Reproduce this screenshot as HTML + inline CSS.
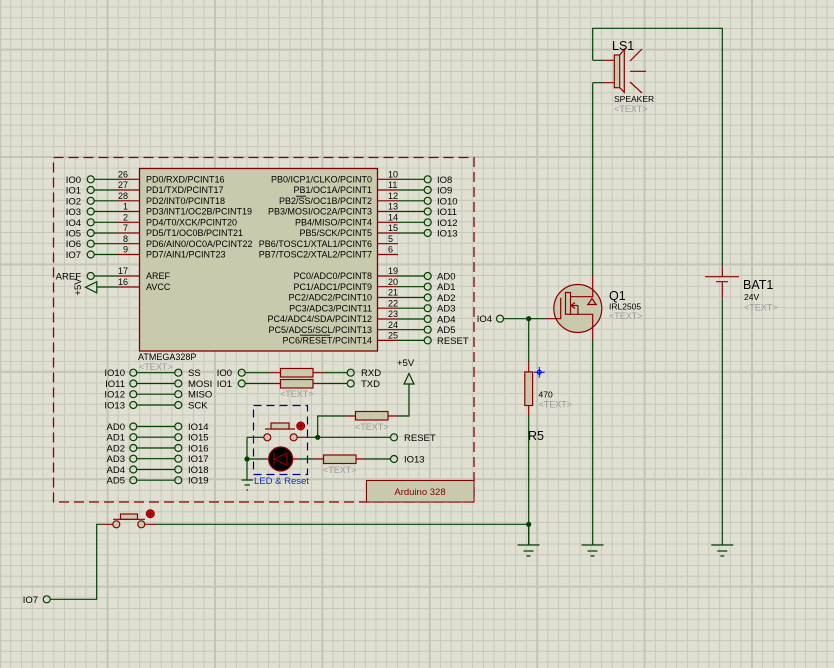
<!DOCTYPE html>
<html><head><meta charset="utf-8"><style>
html,body{margin:0;padding:0;background:#e0e0d2;}
svg{display:block;}
text{font-family:"Liberation Sans",sans-serif;fill:#000;}
.s{font-size:9.5px;}
.c{font-size:9px;}
.g{font-size:9px;fill:#9a9a9a;}
.n{font-size:9.5px;}
.big{font-size:12.5px;}
</style></head><body>
<svg width="834" height="668" viewBox="0 0 834 668" xmlns="http://www.w3.org/2000/svg">
<defs>
<pattern id="mi" x="10.3" y="6.5" width="10.74" height="10.74" patternUnits="userSpaceOnUse">
<path d="M0.5 0V10.74M0 0.5H10.74" stroke="#c6c7b9" stroke-width="1" fill="none"/>
</pattern>
<pattern id="ma" x="106.6" y="48.6" width="107.4" height="107.4" patternUnits="userSpaceOnUse">
<path d="M1 0V107.4M0 1H107.4" stroke="#c3c4b6" stroke-width="2" fill="none"/>
</pattern>
</defs>
<rect width="834" height="668" fill="#e0e0d2"/>
<rect width="834" height="668" fill="url(#mi)"/>
<rect width="834" height="668" fill="url(#ma)"/>

<!-- main dashed border -->
<rect x="53.5" y="157.5" width="420.5" height="344.5" fill="none" stroke="#8b0000" stroke-width="1.3" stroke-dasharray="10,5"/>
<rect x="366.5" y="480.5" width="107.5" height="21.5" fill="#c9c9ad" stroke="#800000" stroke-width="1"/>
<text x="420" y="495" text-anchor="middle" style="font-size:9.5px;fill:#800000">Arduino 328</text>

<!-- chip -->
<rect x="139.5" y="168.5" width="238" height="182.5" fill="#c9c9ad" stroke="#800000" stroke-width="1.3"/>

<g stroke-width="1.2" fill="none">
<g stroke="#004000">
<path d="M94 179.3H118M94 190H118M94 200.8H118M94 211.5H118M94 222.3H118M94 233H118M94 243.7H118M94 254.5H118M94 276H118M97 287H118"/>
<path d="M398 179.3H424M398 190H424M398 200.8H424M398 211.5H424M398 222.3H424M398 233H424M398 276H424M398 286.7H424M398 297.5H424M398 308.2H424M398 319H424M398 329.7H424M398 340.4H424"/>
</g>
<g stroke="#8b0000">
<path d="M118 179.3H139M118 190H139M118 200.8H139M118 211.5H139M118 222.3H139M118 233H139M118 243.7H139M118 254.5H139M118 276H139M118 287H139"/>
<path d="M377 179.3H398M377 190H398M377 200.8H398M377 211.5H398M377 222.3H398M377 233H398M377 243.7H398M377 254.5H398M377 276H398M377 286.7H398M377 297.5H398M377 308.2H398M377 319H398M377 329.7H398M377 340.4H398"/>
</g>
<g stroke="#004000">
<circle cx="90.7" cy="179.3" r="3.5"/><circle cx="90.7" cy="190" r="3.5"/><circle cx="90.7" cy="200.8" r="3.5"/><circle cx="90.7" cy="211.5" r="3.5"/><circle cx="90.7" cy="222.3" r="3.5"/><circle cx="90.7" cy="233" r="3.5"/><circle cx="90.7" cy="243.7" r="3.5"/><circle cx="90.7" cy="254.5" r="3.5"/><circle cx="90.7" cy="276" r="3.5"/>
<circle cx="427.7" cy="179.3" r="3.5"/><circle cx="427.7" cy="190" r="3.5"/><circle cx="427.7" cy="200.8" r="3.5"/><circle cx="427.7" cy="211.5" r="3.5"/><circle cx="427.7" cy="222.3" r="3.5"/><circle cx="427.7" cy="233" r="3.5"/>
<circle cx="427.7" cy="276" r="3.5"/><circle cx="427.7" cy="286.7" r="3.5"/><circle cx="427.7" cy="297.5" r="3.5"/><circle cx="427.7" cy="308.2" r="3.5"/><circle cx="427.7" cy="319" r="3.5"/><circle cx="427.7" cy="329.7" r="3.5"/><circle cx="427.7" cy="340.4" r="3.5"/>
<path d="M85.5 287.3L96.8 281.7V292.9Z"/>
</g>
</g>

<g class="s" text-anchor="end">
<text x="81" y="182.8">IO0</text><text x="81" y="193.5">IO1</text><text x="81" y="204.3">IO2</text><text x="81" y="215">IO3</text><text x="81" y="225.8">IO4</text><text x="81" y="236.5">IO5</text><text x="81" y="247.2">IO6</text><text x="81" y="258">IO7</text><text x="81" y="279.5">AREF</text>
</g>
<text class="s" transform="translate(81,287) rotate(-90)" text-anchor="middle">+5V</text>
<g class="s">
<text x="437" y="182.8">IO8</text><text x="437" y="193.5">IO9</text><text x="437" y="204.3">IO10</text><text x="437" y="215">IO11</text><text x="437" y="225.8">IO12</text><text x="437" y="236.5">IO13</text>
<text x="437" y="279.5">AD0</text><text x="437" y="290.2">AD1</text><text x="437" y="301">AD2</text><text x="437" y="311.7">AD3</text><text x="437" y="322.5">AD4</text><text x="437" y="333.2">AD5</text><text x="437" y="343.9">RESET</text>
</g>
<g class="c" text-anchor="end">
<text x="128" y="177.5">26</text><text x="128" y="188.2">27</text><text x="128" y="199">28</text><text x="128" y="209.7">1</text><text x="128" y="220.5">2</text><text x="128" y="231.2">7</text><text x="128" y="241.9">8</text><text x="128" y="252.7">9</text><text x="128" y="274.2">17</text><text x="128" y="285">16</text>
</g>
<g class="c">
<text x="388" y="177.5">10</text><text x="388" y="188.2">11</text><text x="388" y="199">12</text><text x="388" y="209.7">13</text><text x="388" y="220.5">14</text><text x="388" y="231.2">15</text><text x="388" y="241.9">5</text><text x="388" y="252.7">6</text>
<text x="388" y="274.2">19</text><text x="388" y="285">20</text><text x="388" y="295.7">21</text><text x="388" y="306.4">22</text><text x="388" y="317.2">23</text><text x="388" y="327.9">24</text><text x="388" y="338.6">25</text>
</g>
<g class="c">
<text x="146" y="182.5">PD0/RXD/PCINT16</text><text x="146" y="193.2">PD1/TXD/PCINT17</text><text x="146" y="204">PD2/INT0/PCINT18</text><text x="146" y="214.7">PD3/INT1/OC2B/PCINT19</text><text x="146" y="225.5">PD4/T0/XCK/PCINT20</text><text x="146" y="236.2">PD5/T1/OC0B/PCINT21</text><text x="146" y="246.9">PD6/AIN0/OC0A/PCINT22</text><text x="146" y="257.7">PD7/AIN1/PCINT23</text>
<text x="146" y="279.2">AREF</text><text x="146" y="290">AVCC</text>
</g>
<g class="c" text-anchor="end">
<text x="372" y="182.5">PB0/ICP1/CLKO/PCINT0</text><text x="372" y="193.2">PB1/OC1A/PCINT1</text><text x="372" y="204">PB2/SS/OC1B/PCINT2</text><text x="372" y="214.7">PB3/MOSI/OC2A/PCINT3</text><text x="372" y="225.5">PB4/MISO/PCINT4</text><text x="372" y="236.2">PB5/SCK/PCINT5</text><text x="372" y="246.9">PB6/TOSC1/XTAL1/PCINT6</text><text x="372" y="257.7">PB7/TOSC2/XTAL2/PCINT7</text>
<text x="372" y="279.2">PC0/ADC0/PCINT8</text><text x="372" y="290">PC1/ADC1/PCINT9</text><text x="372" y="300.7">PC2/ADC2/PCINT10</text><text x="372" y="311.4">PC3/ADC3/PCINT11</text><text x="372" y="322.2">PC4/ADC4/SDA/PCINT12</text><text x="372" y="332.9">PC5/ADC5/SCL/PCINT13</text><text x="372" y="343.6">PC6/RESET/PCINT14</text>
</g>
<path d="M300 335.2H330M296 196.2H306" stroke="#000" stroke-width="0.8"/>
<text x="138" y="360" class="c">ATMEGA328P</text>
<text x="139" y="370" class="g">&lt;TEXT&gt;</text>

<g stroke="#004000" stroke-width="1.2" fill="none">
<path d="M136.8 372.7H174.8M136.8 383.5H174.8M136.8 394.2H174.8M136.8 405H174.8M136.8 426.5H174.8M136.8 437.2H174.8M136.8 448H174.8M136.8 458.7H174.8M136.8 469.5H174.8M136.8 480.2H174.8"/>
<circle cx="133.3" cy="372.7" r="3.5"/><circle cx="133.3" cy="383.5" r="3.5"/><circle cx="133.3" cy="394.2" r="3.5"/><circle cx="133.3" cy="405" r="3.5"/><circle cx="133.3" cy="426.5" r="3.5"/><circle cx="133.3" cy="437.2" r="3.5"/><circle cx="133.3" cy="448" r="3.5"/><circle cx="133.3" cy="458.7" r="3.5"/><circle cx="133.3" cy="469.5" r="3.5"/><circle cx="133.3" cy="480.2" r="3.5"/>
<circle cx="178.3" cy="372.7" r="3.5"/><circle cx="178.3" cy="383.5" r="3.5"/><circle cx="178.3" cy="394.2" r="3.5"/><circle cx="178.3" cy="405" r="3.5"/><circle cx="178.3" cy="426.5" r="3.5"/><circle cx="178.3" cy="437.2" r="3.5"/><circle cx="178.3" cy="448" r="3.5"/><circle cx="178.3" cy="458.7" r="3.5"/><circle cx="178.3" cy="469.5" r="3.5"/><circle cx="178.3" cy="480.2" r="3.5"/>
<circle cx="241.7" cy="372.7" r="3.5"/><circle cx="241.7" cy="383.5" r="3.5"/>
<circle cx="350.7" cy="372.7" r="3.5"/><circle cx="350.7" cy="383.5" r="3.5"/>
<path d="M245.2 372.7H270M245.2 383.5H270M323 372.7H347.2M323 383.5H347.2"/>
<path d="M409 384V416H398M345 416H317.7V437.3M307 437.3H390.5M365 459H390.5M300 459H313"/>
<circle cx="394" cy="437.3" r="3.5"/><circle cx="394" cy="459" r="3.5"/>
<path d="M404 384L409 373.5L414 384Z"/>
<path d="M247 437.3H263M247 437.3V480M247 459H265M241.5 480H253M244.5 485H250M246.5 490H248"/>
</g>
<g stroke="#8b0000" stroke-width="1.2" fill="#c9c9ad">
<path d="M270 372.7H280M270 383.5H280M313 372.7H323M313 383.5H323M388 416H398M345 416H355M313 459H323M355 459H365M263 437.3H264M297 437.3H307M265 459H269M292 459H300" fill="none"/>
<rect x="280.5" y="368.5" width="32.5" height="8.5"/>
<rect x="280.5" y="379.5" width="32.5" height="8.5"/>
<rect x="355.5" y="411.5" width="32.5" height="8.5"/>
<rect x="323.5" y="455" width="32.5" height="8.5"/>
<path d="M265 429H295" fill="none"/>
<rect x="271" y="423" width="18" height="6"/>
<circle cx="267.3" cy="437.3" r="3.5"/>
<circle cx="293.7" cy="437.3" r="3.5"/>
<circle cx="280.7" cy="459" r="12" fill="#000"/>
<path d="M274 453V465M274 459L287 453V465Z" fill="none"/>
</g>
<circle cx="300.7" cy="426" r="4" fill="#e00000" stroke="#800000" stroke-width="1"/>
<path d="M300.7 423.5V428.5M298.2 426H303.2" stroke="#600000" stroke-width="1"/>
<circle cx="317.7" cy="437.3" r="2.6" fill="#004000"/>
<circle cx="247" cy="459" r="2.6" fill="#004000"/>
<rect x="253.5" y="405.5" width="54" height="69" fill="none" stroke="#000090" stroke-width="1.2" stroke-dasharray="8,5"/>
<text x="254" y="484" style="font-size:9.5px;fill:#1030c0">LED &amp; Reset</text>

<g class="s" text-anchor="end">
<text x="125" y="376.2">IO10</text><text x="125" y="387">IO11</text><text x="125" y="397.7">IO12</text><text x="125" y="408.5">IO13</text>
<text x="125" y="430">AD0</text><text x="125" y="440.7">AD1</text><text x="125" y="451.5">AD2</text><text x="125" y="462.2">AD3</text><text x="125" y="473">AD4</text><text x="125" y="483.7">AD5</text>
<text x="232" y="376.2">IO0</text><text x="232" y="387">IO1</text>
</g>
<g class="s">
<text x="188" y="376.2">SS</text><text x="188" y="387">MOSI</text><text x="188" y="397.7">MISO</text><text x="188" y="408.5">SCK</text>
<text x="188" y="430">IO14</text><text x="188" y="440.7">IO15</text><text x="188" y="451.5">IO16</text><text x="188" y="462.2">IO17</text><text x="188" y="473">IO18</text><text x="188" y="483.7">IO19</text>
<text x="361" y="376.2">RXD</text><text x="361" y="387">TXD</text>
<text x="404" y="440.8">RESET</text><text x="404" y="462.5">IO13</text>
<text x="397" y="366">+5V</text>
</g>
<text x="280" y="397" class="g">&lt;TEXT&gt;</text>
<text x="355" y="430" class="g">&lt;TEXT&gt;</text>
<text x="323" y="473" class="g">&lt;TEXT&gt;</text>

<g stroke="#004000" stroke-width="1.2" fill="none">
<path d="M155 524.3H528.7V545M50.2 599.3H96.7V524.3H101"/>
<circle cx="46.7" cy="599.3" r="3.5"/>
</g>
<g stroke="#8b0000" stroke-width="1.2" fill="#c9c9ad">
<path d="M101 524.3H112.8M144.8 524.3H155M113 519.3H145" fill="none"/>
<rect x="120.5" y="514" width="17" height="5.3"/>
<circle cx="116.3" cy="524.3" r="3.5"/>
<circle cx="141.3" cy="524.3" r="3.5"/>
</g>
<circle cx="150.3" cy="513.7" r="4" fill="#e00000" stroke="#800000" stroke-width="1"/>
<path d="M150.3 511.2V516.2M147.8 513.7H152.8" stroke="#600000" stroke-width="1"/>
<text x="38" y="602.8" class="s" text-anchor="end">IO7</text>
<circle cx="528.7" cy="524.3" r="2.6" fill="#004000"/>

<g stroke="#004000" stroke-width="1.2" fill="none">
<circle cx="500" cy="318.7" r="3.5"/>
<path d="M503.5 318.7H545M528.7 318.7V362M528.7 415V545M592.7 60.3V28.3H722.3V266.7M722.3 298.3V545M592.7 60.3H604M592.7 82.7H604M592.7 82.7V275M592.7 340V545"/>
<path d="M517.5 545H539.5M523.5 551H533.5M526.5 556H530.5M581.5 545H603.5M587.5 551H597.5M590.5 556H594.5M711.3 545H733.3M717.3 551H727.3M720.3 556H724.3"/>
</g>
<circle cx="528.7" cy="318.7" r="2.6" fill="#004000"/>
<text x="492" y="322.2" class="s" text-anchor="end">IO4</text>
<g stroke="#8b0000" stroke-width="1.2" fill="#c9c9ad">
<path d="M528.7 362V372M528.7 405V415M722.3 266.7V276.7M722.3 281.7V298.3M705 276.7H739M716 281.7H728M604 60.3H614M604 82.7H614" fill="none"/>
<rect x="524.8" y="372" width="7.8" height="33.5"/>
<rect x="614.3" y="55" width="5.4" height="32.7"/>
<path d="M619.7 55L624.3 49.3V92.3L619.7 87.7M630 61L642 49M630 71.3H646M630 82L642 93" fill="none"/>
<circle cx="577.8" cy="308.5" r="24"/>
<path d="M545 318.7H560.7V297.7M592.7 275V296.7H571M571 314.3H592.7V340M571 305.5H578M575 302.5L571 305.5L575 308.5M578 305.5V314.3M587 304.5H597M592 298.5L588 304.5H596Z" fill="none"/>
<rect x="565.5" y="292.5" width="5" height="21.8" fill="none"/>
</g>
<path d="M539.3 367V377.6M534 372.3H544.6" stroke="#0000e0" stroke-width="1"/>
<circle cx="539.3" cy="372.3" r="2" fill="none" stroke="#0000e0" stroke-width="1"/>

<text x="612" y="50" class="big">LS1</text>
<text x="614" y="102" style="font-size:8.5px">SPEAKER</text>
<text x="614" y="112" class="g">&lt;TEXT&gt;</text>
<text x="609" y="300" class="big">Q1</text>
<text x="609" y="309.5" style="font-size:8.5px">IRL2505</text>
<text x="609" y="319" class="g">&lt;TEXT&gt;</text>
<text x="743" y="289" class="big">BAT1</text>
<text x="744" y="300" style="font-size:8.5px">24V</text>
<text x="744" y="310.5" class="g">&lt;TEXT&gt;</text>
<text x="538.5" y="397.5" style="font-size:8.5px">470</text>
<text x="538.5" y="407.5" class="g">&lt;TEXT&gt;</text>
<text x="528" y="440" class="big">R5</text>
</svg>
</body></html>
